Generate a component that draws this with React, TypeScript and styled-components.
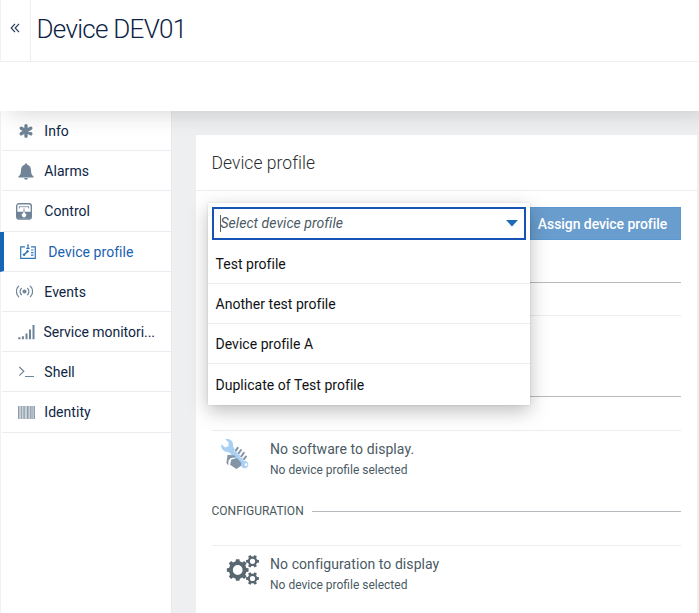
import React from 'react';
import styled, { createGlobalStyle } from 'styled-components';

const GlobalStyle = createGlobalStyle`
  * { box-sizing: border-box; }
  body { margin: 0; background: #eeeff1; font-family: Roboto, "Liberation Sans", sans-serif; overflow: hidden; }
  svg { display: block; }
`;

const Page = styled.div`
  height: 613px;
  display: flex;
  flex-direction: column;
  overflow: hidden;
`;

const Header = styled.header`
  flex: none;
  height: 111px;
  background: #fff;
  position: relative;
  z-index: 2;
  box-shadow: 8px 2px 22px rgba(0, 0, 0, 0.17);
  clip-path: inset(0 0 -40px 0);
`;

const TitleBar = styled.div`
  height: 62px;
  display: flex;
  border-bottom: 1px solid #eeeff0;
  border-left: 1px solid #f0f0f6;
`;

const Collapse = styled.button`
  width: 30px;
  height: 61px;
  padding: 0 1px 5px 0;
  border: 0;
  border-right: 1px solid #eceef0;
  background: none;
  display: flex;
  align-items: center;
  justify-content: center;
`;

const Title = styled.h1`
  margin: 0 0 0 5.5px;
  font-weight: 300;
  font-size: 26px;
  line-height: 58px;
  letter-spacing: -0.72px;
  color: #0b2244;
`;

const Body = styled.div`
  flex: 1;
  display: flex;
  min-height: 0;
`;

const Sidebar = styled.nav`
  width: 172px;
  flex: none;
  background: #fff;
  border-left: 1px solid #f0f0f6;
  border-right: 1px solid #e7e9eb;
`;

const NavItem = styled.a<{ $active?: boolean }>`
  height: 40.2px;
  margin-left: -1px;
  display: flex;
  align-items: center;
  border-bottom: 1px solid #ebeced;
  border-left: 4px solid ${p => (p.$active ? '#1666b8' : 'transparent')};
  color: ${p => (p.$active ? '#1a5fb0' : '#0e2545')};
  padding-left: ${p => (p.$active ? 14 : 10)}px;
  padding-top: 1px;
  font-size: 14px;
`;

const NavIcon = styled.span<{ $active?: boolean; $shift: number }>`
  width: 24px;
  flex: none;
  display: flex;
  justify-content: center;
  padding-right: ${p => p.$shift * 2}px;
  color: ${p => (p.$active ? '#3375b9' : '#708498')};
  svg { flex: none; }
`;

const NavLabel = styled.span<{ $gap: number; $spacing: number }>`
  margin-left: ${p => p.$gap}px;
  letter-spacing: ${p => p.$spacing}px;
  white-space: nowrap;
`;

const Main = styled.main`
  flex: 1;
  padding: 24px 2px 0 23.5px;
`;

const Card = styled.section`
  height: 500px;
  background: #fff;
`;

const CardHeader = styled.h2`
  margin: 0;
  height: 56px;
  padding-left: 16px;
  border-bottom: 1px solid #edeeef;
  font-weight: 300;
  font-size: 17.5px;
  line-height: 56px;
  letter-spacing: 0.03px;
  color: #2a2d30;
`;

const CardBody = styled.div`
  padding: 16px 16px 0 16px;
`;

const AssignRow = styled.div`
  display: flex;
  justify-content: space-between;
  height: 33px;
  margin-bottom: 33.400px;
`;

const SelectWrap = styled.div`
  position: relative;
  width: 314px;
`;

const Dropdown = styled.div`
  position: absolute;
  z-index: 1;
  left: -4px;
  top: -4px;
  width: 322px;
  height: 201.500px;
  padding: 4px 4px 0;
  background: #fff;
  box-shadow: 0 6px 18px rgba(0, 0, 0, 0.26), 0 0 2px rgba(0, 0, 0, 0.12);
`;

const Field = styled.div`
  height: 33px;
  width: 314px;
  border: 2px solid #1653b4;
  display: flex;
  align-items: center;
  justify-content: space-between;
  padding: 0 6px;
`;

const Placeholder = styled.span`
  border-left: 1px solid #56636b;
  font-style: italic;
  font-size: 14px;
  line-height: 17px;
  letter-spacing: 0.05px;
  color: #4c5b64;
`;

const OptionList = styled.div`
  padding-top: 3.500px;
`;

const Option = styled.div`
  height: 40.25px;
  margin: 0 -4px;
  padding: 1px 8px 0;
  display: flex;
  align-items: center;
  border-bottom: 1px solid #ebecee;
  font-size: 14px;
  letter-spacing: 0.03px;
  color: #101214;
  &:last-child { border-bottom: 0; }
`;

const AssignButton = styled.button`
  width: 151px;
  height: 33px;
  border: 1px solid #5998d3;
  background: #699dce;
  color: #fff;
  font-family: inherit;
  font-weight: 500;
  font-size: 14px;
  letter-spacing: -0.07px;
  padding: 0 6px 0 0;
`;

const Section = styled.section`
  height: 114.6px;
`;

const SectionHeading = styled.div`
  display: flex;
  align-items: center;
  height: 17px;
  font-size: 12px;
  color: #4a5860;
  &::after {
    content: '';
    flex: 1;
    height: 1px;
    margin: 1px 0 0 8px;
    background: #b5bbbf;
  }
`;

const EmptyState = styled.div`
  margin-top: 25px;
  height: 62px;
  border-top: 1px solid #eceded;
  display: flex;
  padding-top: 7px;
`;

const EmptyIcon = styled.div`
  width: 58.500px;
  padding-left: 8px;
  flex: none;
`;

const EmptyTitle = styled.div`
  font-size: 14px;
  line-height: 23px;
  letter-spacing: 0.07px;
  color: #4a5a64;
`;

const EmptyNote = styled.div`
  font-size: 12px;
  line-height: 18px;
  color: #4a5a64;
`;

/* Outline of a gear: alternating outer and root arcs around a hole. */
function gear(cx: number, cy: number, outer: number, root: number, hole: number, teeth: number, turn = 0) {
  const step = (Math.PI * 2) / teeth;
  const at = (r: number, a: number) => `${(cx + r * Math.cos(a)).toFixed(2)} ${(cy + r * Math.sin(a)).toFixed(2)}`;
  let d = '';
  for (let i = 0; i < teeth; i++) {
    const a = i * step + turn;
    d += `${i ? 'L' : 'M'}${at(root, a - step * 0.3)}L${at(outer, a - step * 0.2)}L${at(outer, a + step * 0.2)}L${at(root, a + step * 0.3)}`;
  }
  return `${d}ZM${cx - hole} ${cy}a${hole} ${hole} 0 1 0 ${hole * 2} 0a${hole} ${hole} 0 1 0 ${-hole * 2} 0Z`;
}

const GearsIcon = () => (
  <svg width="42" height="34" viewBox="0 0 42 34" fill="#596771" fillRule="evenodd">
    <path d={gear(17.7, 17, 11, 8.9, 4.9, 8)} />
    <path d={gear(32.5, 8.3, 6.6, 4.8, 2.6, 6)} />
    <path d={gear(32.5, 25.5, 6.6, 4.8, 2.6, 6)} />
  </svg>
);

const ToolIcon = () => (
  <svg width="34" height="34" viewBox="0 0 34 34">
    <path
      d="M5.500 1.200c4-.9 7.400 1.500 7.600 5.100.1 1.500-.2 2.600.8 3.700L26 23.300a3.600 3.600 0 1 1-4.700 4.500L9.500 14.700c-1.200-1.100-2.700-.6-4.200-1.200C2.300 12.300.600 9.300 1.200 6.200l4 3.400 3.200-1.300.300-3.500z"
      fill="#a8d0f3"
    />
    <circle cx="26" cy="26.700" r="1.400" fill="#fff" />
    <path d="M15.800 12.600l1.900-2.700M18.500 15.500l2.500-3.500M21.200 18.500l2.600-3.600M24 21.200l2-2.700" stroke="#fff" strokeWidth="3.200" strokeLinecap="round" />
    <path d="M15.800 12.600l1.900-2.700M18.500 15.500l2.500-3.500M21.200 18.500l2.600-3.600M24 21.200l2-2.700" stroke="#8294a5" strokeWidth="2" strokeLinecap="round" />
    <path d="M7.600 16.800l6.800.6 1.600 1.700-5.700 1.100-1.800 2.600-.3 4.600-1.800-2.300z" fill="#8294a5" />
    <path d="M11.300 21.400l5.800-1.200 4.200 4.600-.4 3.200-4.500 2.900-6.300-4.200z" fill="#8294a5" />
  </svg>
);

const icons = {
  info: (
    <svg width="16" height="16" viewBox="0 0 16 16" stroke="currentColor" strokeWidth="3.400" strokeLinecap="round">
      <path d="M8 2.700v10.600M3.200 5.200l9.600 5.600M12.800 5.200l-9.600 5.600" />
    </svg>
  ),
  alarms: (
    <svg width="16" height="17" viewBox="0 0 16 17" fill="currentColor">
      <path d="M8 .5c-.8 0-1.300.5-1.300 1.200C4.200 2.300 3 4.300 3 7.200c0 3.400-.9 5-2.600 6.200v1h15.200v-1C13.900 12.200 13 10.600 13 7.200c0-2.900-1.200-4.900-3.700-5.500C9.300 1 8.800.5 8 .5zM6.200 14.900a1.800 1.800 0 0 0 3.600 0z" />
    </svg>
  ),
  control: (
    <svg width="16" height="17" viewBox="0 0 16 17">
      <rect x="0.700" y="0.700" width="14.600" height="15.400" rx="2.300" fill="#fff" stroke="currentColor" strokeWidth="1.400" />
      <path d="M1 8.800h14v5.500a1.500 1.500 0 0 1-1.500 1.500h-11A1.500 1.500 0 0 1 1 14.300z" fill="currentColor" />
      <path d="M3 3.700h10M3.300 3.500v2M12.700 3.500v2" stroke="currentColor" strokeWidth=".8" fill="none" />
      <path d="M8 8.200l1.100 2a2.200 2.200 0 1 1-2.200 0z" fill="#fff" />
      <path d="M8 5.500v3.500" stroke="currentColor" strokeWidth=".9" />
    </svg>
  ),
  profile: (
    <svg width="16" height="15" viewBox="0 0 16 15" fill="none" stroke="currentColor" strokeWidth="1.200">
      <path d="M5 2.800H.7v11.500h14.600V2.800H11M8 1.500v3M6.300 4.300h3.400" />
      <circle cx="8" cy="1.100" r=".9" fill="currentColor" stroke="none" />
      <path d="M3.600 11.200L8 7" strokeWidth="1.500" />
      <path d="M3.300 11.500l1.500-1.500M6.800 8l1.500-1.500" strokeWidth="2.400" />
      <path d="M11 6h2.500M11 8.600h2.500M11 11.200h2.500" />
    </svg>
  ),
  events: (
    <svg width="17" height="13" viewBox="0 0 17 13" fill="none" stroke="currentColor" strokeWidth="1.200" strokeLinecap="round">
      <circle cx="8.500" cy="6.500" r="1.500" fill="currentColor" />
      <path d="M5.500 3.300a4.300 4.300 0 0 0 0 6.400M11.500 3.300a4.300 4.300 0 0 1 0 6.400M2.700 1.100a7.500 7.500 0 0 0 0 10.800M14.300 1.100a7.500 7.500 0 0 1 0 10.800" />
    </svg>
  ),
  signal: (
    <svg width="17" height="16" viewBox="0 0 17 16" fill="currentColor">
      <path d="M.3 13.200h2.200v2H.3zM3.900 12.200h2v3h-2zM7.500 9.500h2v5.700h-2zM11 5.500h2v9.700h-2zM14.500 1h2v14.200h-2z" />
    </svg>
  ),
  shell: (
    <svg width="17" height="12" viewBox="0 0 17 12" fill="none" stroke="currentColor" strokeWidth="1.200">
      <path d="M1.300 1l4.500 4.300-4.500 4.300M7 10.500h9" />
    </svg>
  ),
  identity: (
    <svg width="17" height="13" viewBox="0 0 17 13" fill="#8f9dab">
      <path fill="#c9d1d8" d="M0 0h17v13H0z" />
      <path d="M0 0h1.200v13H0zM3 0h.8v13H3zM5.500 0h1.200v13H5.500zM9 0h1.500v13H9zM12 0h.8v13h-.8zM13.600 0h.9v13h-.9zM15.800 0H17v13h-1.200z" />
    </svg>
  ),
};

interface NavEntry {
  icon: keyof typeof icons;
  label: string;
  gap?: number;
  spacing?: number;
  shift?: number;
  active?: boolean;
}

const navItems: NavEntry[] = [
  { icon: 'info', label: 'Info' },
  { icon: 'alarms', label: 'Alarms' },
  { icon: 'control', label: 'Control', shift: 2 },
  { icon: 'profile', label: 'Device profile', active: true, shift: 2 },
  { icon: 'events', label: 'Events', shift: 2 },
  { icon: 'signal', label: 'Service monitori...', gap: 5.5, spacing: -0.03 },
  { icon: 'shell', label: 'Shell' },
  { icon: 'identity', label: 'Identity' },
];

const options = ['Test profile', 'Another test profile', 'Device profile A', 'Duplicate of Test profile'];

export default function App() {
  return (
    <Page>
      <GlobalStyle />
      <Header>
        <TitleBar>
          <Collapse aria-label="Collapse">
            <svg width="10" height="10" viewBox="0 0 10 10" fill="none" stroke="#263b58" strokeWidth="1.200">
              <path d="M5 .8L1.200 5 5 9.200M9 .8L5.200 5 9 9.200" />
            </svg>
          </Collapse>
          <Title>Device DEV01</Title>
        </TitleBar>
      </Header>
      <Body>
        <Sidebar>
          {navItems.map(item => (
            <NavItem key={item.label} $active={item.active}>
              <NavIcon $active={item.active} $shift={item.shift ?? 0}>{icons[item.icon]}</NavIcon>
              <NavLabel $gap={item.gap ?? 6.3} $spacing={item.spacing ?? 0.05}>{item.label}</NavLabel>
            </NavItem>
          ))}
        </Sidebar>
        <Main>
          <Card>
            <CardHeader>Device profile</CardHeader>
            <CardBody>
              <AssignRow>
                <SelectWrap>
                  <Dropdown>
                    <Field>
                      <Placeholder>Select device profile</Placeholder>
                      <svg width="12" height="7" viewBox="0 0 12 7" fill="#1c6bb9">
                        <path d="M0 0h12L6 6.500z" />
                      </svg>
                    </Field>
                    <OptionList>
                      {options.map(name => (
                        <Option key={name}>{name}</Option>
                      ))}
                    </OptionList>
                  </Dropdown>
                </SelectWrap>
                <AssignButton>Assign device profile</AssignButton>
              </AssignRow>
              <Section>
                <SectionHeading />
                <EmptyState />
              </Section>
              <Section>
                <SectionHeading />
                <EmptyState>
                  <EmptyIcon><ToolIcon /></EmptyIcon>
                  <div>
                    <EmptyTitle>No software to display.</EmptyTitle>
                    <EmptyNote>No device profile selected</EmptyNote>
                  </div>
                </EmptyState>
              </Section>
              <Section>
                <SectionHeading>CONFIGURATION</SectionHeading>
                <EmptyState>
                  <EmptyIcon><GearsIcon /></EmptyIcon>
                  <div>
                    <EmptyTitle>No configuration to display</EmptyTitle>
                    <EmptyNote>No device profile selected</EmptyNote>
                  </div>
                </EmptyState>
              </Section>
            </CardBody>
          </Card>
        </Main>
      </Body>
    </Page>
  );
}
